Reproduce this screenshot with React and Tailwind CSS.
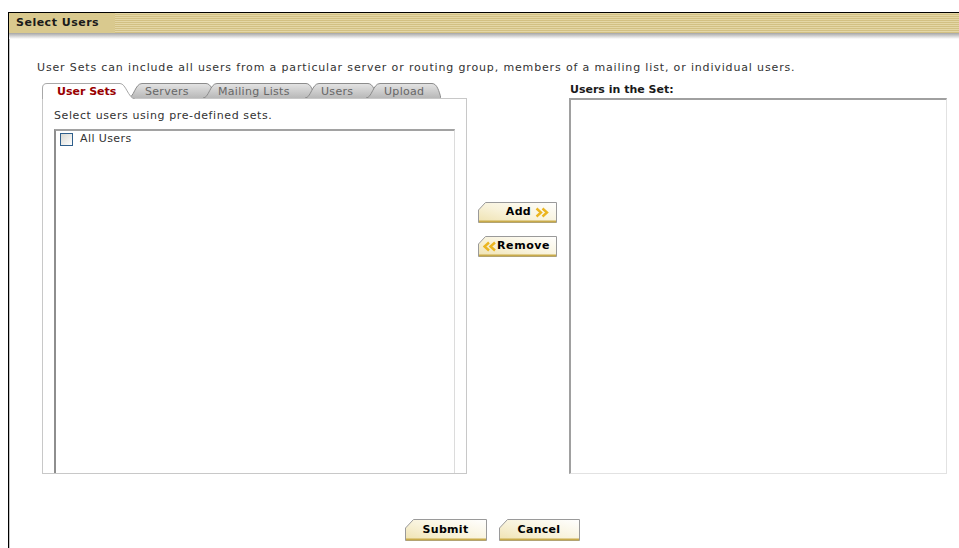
import React, { useId } from "react";

// beveled cream button with a clipped top-left corner
function CutButton({ w, h, className = "", children }) {
  const id = useId();
  const cut = h > 21 ? 9 : 8;
  return (
    <button
      type="button"
      className={`relative flex items-center font-bold text-[11px] text-black ${className}`}
      style={{ width: w, height: h }}
    >
      <svg width={w} height={h} viewBox={`0 0 ${w} ${h}`} className="absolute inset-0">
        <defs>
          <linearGradient id={id} x1="1" y1="0" x2="0" y2="1">
            <stop offset="0" stopColor="#ffffff" />
            <stop offset="0.55" stopColor="#f8f2da" />
            <stop offset="1" stopColor="#efe2b0" />
          </linearGradient>
        </defs>
        <path
          d={`M0.5,${cut} L${cut - 0.5},0.5 H${w - 0.5} V${h - 0.5} H0.5 Z`}
          fill={`url(#${id})`}
          stroke="#9a9a9a"
        />
        <line x1="1" y1={h - 1.5} x2={w - 1} y2={h - 1.5} stroke="#c9ab4a" strokeWidth="2" />
      </svg>
      <span className="relative flex items-center w-full h-full">{children}</span>
    </button>
  );
}

function Chevrons({ dir }) {
  const pts =
    dir === "right"
      ? ["1.5,1.5 6,5.5 1.5,9.5", "7.5,1.5 12,5.5 7.5,9.5"]
      : ["6,1.5 1.5,5.5 6,9.5", "12,1.5 7.5,5.5 12,9.5"];
  return (
    <svg width="14" height="11" viewBox="0 0 14 11" className="shrink-0">
      {pts.map((p) => (
        <polyline key={p} points={p} fill="none" stroke="#ebb520" strokeWidth="2.4" />
      ))}
    </svg>
  );
}

const tabs = [
  { label: "Servers", w: 87, cls: "-ml-[7px] pl-[17px]" },
  { label: "Mailing Lists", w: 112, cls: "-ml-[12px] pl-[15px]" },
  { label: "Users", w: 72, cls: "-ml-[10px] pl-[16px]" },
  { label: "Upload", w: 75, cls: "-ml-[11px] pl-[18px]" },
];

function GrayTab({ label, w, cls }) {
  const id = useId();
  return (
    <div
      className={`relative h-[15px] flex items-center text-[11px] tracking-[0.3px] text-[#666] ${cls}`}
      style={{ width: w }}
    >
      <svg width={w} height="15" viewBox={`0 0 ${w} 15`} className="absolute inset-0">
        <defs>
          <linearGradient id={id} x1="0" y1="0" x2="0" y2="1">
            <stop offset="0" stopColor="#e4e4e4" />
            <stop offset="1" stopColor="#b8b8b8" />
          </linearGradient>
        </defs>
        <path
          d={`M0,15 C6,15 7,0.5 14,0.5 H${w - 9} C${w - 4},0.5 ${w - 2},8 ${w},15`}
          fill={`url(#${id})`}
          stroke="#8c8c8c"
        />
      </svg>
      <span className="relative leading-none pt-px">{label}</span>
    </div>
  );
}

function ActiveTab() {
  return (
    <div className="relative z-10 w-[93px] h-[16px] -mb-px flex items-center pl-[15px] text-[11px] font-bold text-[#990000]">
      <svg width="93" height="16" viewBox="0 0 93 16" className="absolute inset-0">
        <path d="M0.5,16 V5 Q0.5,0.5 5,0.5 H78 C84,0.5 86,15 93,16" fill="#ffffff" stroke="#a8a8a8" />
      </svg>
      <span className="relative leading-none">User Sets</span>
    </div>
  );
}

export default function App() {
  return (
    <div className="w-[959px] h-[548px] bg-white pt-3 pl-2 overflow-hidden font-['DejaVu_Sans',Verdana,sans-serif] text-[#333]">
      <div className="h-full border-l border-t border-black shadow-[inset_1px_0_0_#c4c4c4]">
        {/* title bar */}
        <div className="flex h-[20px] bg-[#d9c98e]">
          <div className="w-[106px] pl-[7px] flex items-center text-[11px] font-bold tracking-[0.5px] text-[#1a1a1a]">
            Select Users
          </div>
          <div className="flex-1 bg-[repeating-linear-gradient(180deg,#e4d7a6_0px,#e4d7a6_1px,#d2c083_1px,#d2c083_2px)]" />
        </div>
        <div className="h-[6px] bg-linear-to-b from-[#a6a6a6] to-white" />

        <p className="mt-[22px] pl-[28px] text-[11px] leading-[14px] tracking-[0.85px] whitespace-nowrap">
          User Sets can include all users from a particular server or routing group, members of a mailing list, or
          individual users.
        </p>

        <div className="flex mt-[8px] pl-[33px]">
          {/* left: tabbed picker */}
          <div className="w-[425px] flex flex-col">
            <div className="flex items-end h-[15px]">
              <ActiveTab />
              {tabs.map((t) => (
                <GrayTab key={t.label} {...t} />
              ))}
            </div>
            <div className="h-[376px] flex flex-col border border-[#c8c8c8] pl-[11px] pr-[11px]">
              <p className="pt-[10px] text-[11px] leading-[14px] tracking-[0.6px]">Select users using pre-defined sets.</p>
              <div className="mt-[6px] flex-1 border-t-2 border-l-2 border-r border-t-[#a2a2a2] border-l-[#8e8e8e] border-r-[#dcdcdc] pl-[4px] pt-[1px]">
                <label className="flex items-center gap-[7px] text-[11px] leading-[14px] tracking-[0.4px]">
                  <span className="w-[13px] h-[13px] border border-[#2f5f8c] bg-linear-to-br from-[#d8d8d2] to-white" />
                  All Users
                </label>
              </div>
            </div>
          </div>

          {/* middle: move buttons */}
          <div className="w-[102px] pl-[11px] pt-[119px] flex flex-col gap-[13px]">
            <CutButton w={79} h={21}>
              <span className="flex-1 text-right pr-[4px] tracking-[0.3px]">Add</span>
              <span className="pr-[8px]">
                <Chevrons dir="right" />
              </span>
            </CutButton>
            <CutButton w={79} h={21}>
              <span className="pl-[5px]">
                <Chevrons dir="left" />
              </span>
              <span className="tracking-[0.6px]">Remove</span>
            </CutButton>
          </div>

          {/* right: selected users */}
          <div className="w-[378px] flex flex-col">
            <div className="h-[15px] pl-px text-[11px] font-bold text-[#1a1a1a] leading-[14px]">Users in the Set:</div>
            <div className="h-[376px] border-t-2 border-l-2 border-r border-b border-t-[#a0a0a0] border-l-[#a0a0a0] border-r-[#e2e2e2] border-b-[#e2e2e2]" />
          </div>
        </div>

        <div className="mt-[45px] pl-[28px] w-[938px] flex justify-center gap-[12px]">
          <CutButton w={82} h={22}>
            <span className="flex-1 text-center tracking-[0.3px]">Submit</span>
          </CutButton>
          <CutButton w={81} h={22}>
            <span className="flex-1 text-center tracking-[0.3px]">Cancel</span>
          </CutButton>
        </div>
      </div>
    </div>
  );
}
